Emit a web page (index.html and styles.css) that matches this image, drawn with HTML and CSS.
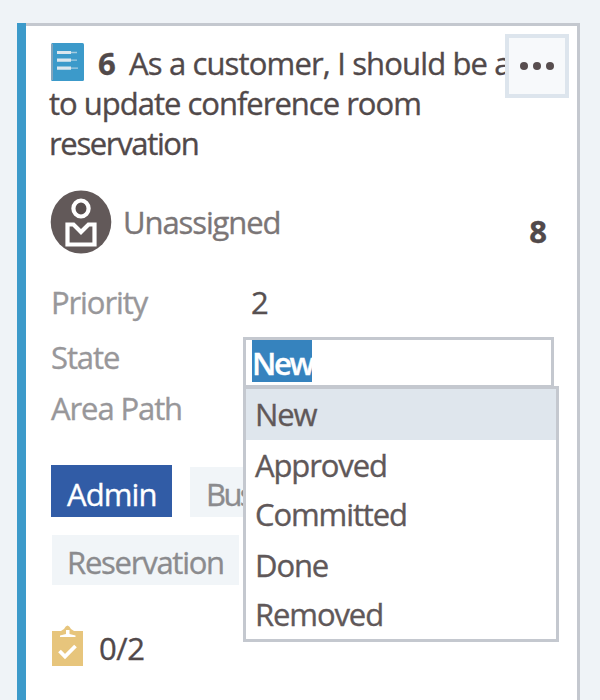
FILE: index.html
```html
<!DOCTYPE html>
<html lang="en">
<head>
<meta charset="utf-8">
<title>Board card</title>
<link rel="stylesheet" href="styles.css">
</head>
<body>
<article class="card">
  <button class="more" aria-label="More actions"><i></i><i></i><i></i></button>
  <h1 class="title">
    <span class="line first"><svg class="book" viewBox="0 0 33 38"><rect width="33" height="38" rx="1.5" fill="#3c9aca"/><path d="M1 1v36" stroke="#9aa9b8" stroke-width="1.500"/><path d="M6 9.500h14M6 17.200h14M6 25.200h14" stroke="#dce7ee" stroke-width="3.200"/><path d="M20 9.500h6M20 17.200h6M20 25.200h7" stroke="#a5cce0" stroke-width="1.300"/></svg><b class="id">6</b><span class="t1">As a customer, I should be able</span></span>
    <span class="line t2">to update conference room</span>
    <span class="line t3">reservation</span>
  </h1>
  <div class="owner">
    <svg class="avatar" viewBox="0 0 62 64"><ellipse cx="31" cy="32" rx="30.3" ry="31.6" fill="#625959"/><ellipse cx="31" cy="18.500" rx="7.600" ry="8" fill="#574e4e" stroke="#fff" stroke-width="4.200"/><path d="M17.500 34.500h6l7.500 7.500 7.500-7.500h6v20h-27z" fill="#625959" stroke="#fff" stroke-width="4.200"/></svg>
    <span class="name">Unassigned</span>
    <b class="effort">8</b>
  </div>
  <dl class="fields">
    <dt class="priority">Priority</dt><dd class="pvalue">2</dd>
    <dt class="state">State</dt>
    <dd class="combo">
      <div class="input"><span class="sel">New</span></div>
      <ul class="menu">
        <li class="active">New</li>
        <li class="low">Approved</li>
        <li>Committed</li>
        <li class="low">Done</li>
        <li>Removed</li>
      </ul>
    </dd>
    <dt class="area">Area Path</dt>
  </dl>
  <div class="tags">
    <span class="tag admin">Admin</span><span class="tag business">Bus</span>
    <span class="tag reservation">Reservation</span>
  </div>
  <div class="tasks">
    <svg class="clip" viewBox="0 0 31 41"><path d="M0 6h9l3-2q3.500-7 7 0l3 2h9v35H0z" fill="#e7c57c"/><path d="M14 5h3.500v4l6 1.500v1.500H8v-1.500l6-1.500z" fill="#fff"/><path d="M7.500 26l5.500 5.500L23.500 21" fill="none" stroke="#fff" stroke-width="3.800"/></svg>
    <span class="count">0/2</span>
  </div>
</article>
</body>
</html>
```
FILE: styles.css
```css
* { box-sizing: border-box; }
body {
  margin: 0;
  height: 700px;
  overflow: hidden;
  padding: 23px 20px 0 17px;
  background: #eff3f7;
  font-family: "Open Sans", "Noto Sans", sans-serif;
  font-size: 31px;
  line-height: 40px;
  color: #51494a;
  -webkit-text-stroke: 0.35px currentColor;
}
.card {
  position: relative;
  height: 677px;
  background:
    linear-gradient(#3c9aca, #3c9aca) left top / 9px 100% no-repeat,
    linear-gradient(#c4c8cf, #c4c8cf) left top / 100% 3px no-repeat,
    #fff;
  border-right: 3px solid #c4c8cf;
  padding: 20px 0 0 32px;
}
.more {
  position: absolute;
  z-index: 1;
  top: 11px;
  right: 8px;
  width: 64px;
  height: 64px;
  border: 4px solid #dde5ed;
  background: #f7f9fb;
  padding: 0;
  display: flex;
  align-items: center;
  justify-content: center;
  gap: 5px;
}
.more i { width: 8px; height: 8px; margin-bottom: 1px; border-radius: 50%; background: #574d4e; }
.title { margin: 0; font-size: 31px; font-weight: 400; white-space: nowrap; }
.line { display: block; }
.first { display: flex; }
.book { width: 33px; height: 38px; margin: 0 0 0 2px; }
.id { margin-left: 14px; width: 31px; }
.t1 { letter-spacing: -0.85px; }
.t2 { letter-spacing: -1px; }
.t3 { letter-spacing: -1.35px; }
.owner { display: flex; margin: 28px 0 0 1px; height: 64px; align-items: flex-start; }
.avatar { width: 62px; height: 64px; margin-top: -1px; }
.name { margin: 11px 0 0 11px; letter-spacing: -1.1px; color: #7b7677; }
.effort { margin: 20px 30px 0 auto; }
.fields {
  margin: 27px 0 0 1px;
  display: grid;
  grid-template-columns: 193px 316px;
  grid-template-rows: 55px 51px 40px;
  color: #98979a;
}
.fields dt { grid-column: 1; letter-spacing: -1.1px; padding-left: 1px; }
.fields dd { margin: 0; }
.fields .pvalue { padding-left: 8px; color: #575051; }
.combo { position: relative; grid-column: 2; height: 51px; }
.input { width: 311px; height: 51px; border: 3px solid #c4c8cf; background: #fff; padding: 0 6px; display: flex; }
.sel {
  height: 42px;
  width: 60px;
  line-height: 46px;
  color: #fff;
  font-weight: 600;
  background: #3683be;
  letter-spacing: -2.3px;
}
.menu {
  position: absolute;
  z-index: 2;
  top: 49px;
  left: 0;
  width: 316px;
  height: 256px;
  margin: 0;
  padding: 0;
  list-style: none;
  border: 3px solid #c4c8cf;
  background: #fff;
  color: #605859;
}
.menu li { height: 50px; padding: 4px 0 0 9px; letter-spacing: -1.1px; }
.menu .low { padding-top: 5px; }
.menu .active { height: 51px; padding-top: 5px; background: #dfe6ed; }
.tags { display: flex; flex-wrap: wrap; column-gap: 18px; row-gap: 18px; width: 380px; margin: 37px 0 0 3px; }
.tag { height: 50px; background: #f1f5f8; color: #8b8b8e; padding: 7px 0 0 15px; letter-spacing: -1.25px; }
.admin { width: 121px; height: 52px; margin-left: -1px; padding: 9px 0 0 16px; background: #315ca6; color: #fff; letter-spacing: -0.9px; }
.business { width: 150px; margin-top: 2px; padding-left: 16px; letter-spacing: -2.6px; }
.reservation { width: 187px; }
.tasks { display: flex; margin: 40px 0 0 3px; }
.clip { width: 31px; height: 41px; }
.count { margin: 3px 0 0 16px; letter-spacing: -0.4px; }
```
